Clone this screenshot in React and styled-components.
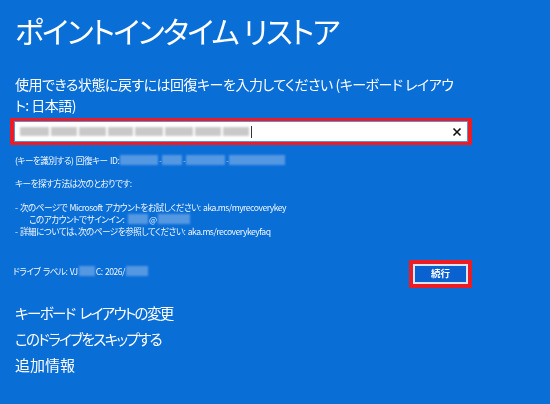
import styled, { createGlobalStyle } from "styled-components";

const GlobalStyle = createGlobalStyle`
  html, body {
    margin: 0;
    padding: 0;
    background: #0a6ed7;
  }
`;

const FONT = `"Noto Sans CJK JP", "Noto Sans", sans-serif`;

const Screen = styled.div`
  width: 550px;
  height: 404px;
  box-sizing: border-box;
  padding: 12px 0 0 15px;
  background: #0a6ed7;
  color: #fff;
  font-family: ${FONT};
  font-feature-settings: "palt";
  overflow: hidden;
  display: flex;
  flex-direction: column;
  filter: blur(0.3px);
`;

const Title = styled.h1`
  margin: 0;
  font-size: 30px;
  line-height: 36px;
  font-weight: 400;
  letter-spacing: -1.7px;
  white-space: nowrap;
`;

const Prompt = styled.p`
  margin: 26px 0 0;
  width: 443px;
  font-size: 14px;
  line-height: 21px;
  font-weight: 400;
  letter-spacing: -0.5px;
`;

const KeyBox = styled.div`
  margin: 2px 0 0 -5px;
  width: 462px;
  height: 27px;
  box-sizing: border-box;
  border-style: solid;
  border-color: #ec1c24;
  border-width: 3px 4px;
`;

const KeyField = styled.div`
  height: 100%;
  box-sizing: border-box;
  border: 1px solid #5b8fd8;
  background: #fff;
  display: flex;
  align-items: center;
  padding: 0 5px;
  color: #111;
`;

const KeyGroup = styled.span`
  display: inline-block;
  width: ${(p) => p.$w}px;
  height: 9px;
  margin-right: 2px;
  background: #c9c9c9;
  filter: blur(1px);
`;

const Caret = styled.span`
  width: 1px;
  height: 12px;
  background: #333;
`;

const ClearIcon = styled.svg`
  margin-left: auto;
  width: 10px;
  height: 10px;
`;

const Small = styled.div`
  font-size: 8.6px;
  line-height: 12px;
  letter-spacing: -0.5px;
  word-spacing: 1px;
  white-space: pre;
  font-weight: 400;
  margin-top: ${(p) => p.$top || 0}px;
  padding-left: ${(p) => p.$indent || 0}px;
  margin-left: ${(p) => p.$shift || 0}px;
  display: flex;
  align-items: center;
  opacity: 0.95;
`;

const Smudge = styled.span`
  display: inline-block;
  width: ${(p) => p.$w}px;
  height: 10px;
  margin: 0 1px;
  background: #5a9be3;
  filter: blur(0.8px);
`;

const Dash = styled.span`
  font-size: 7px;
  color: #cfe3fa;
`;

const ActionRow = styled.div`
  display: flex;
  justify-content: flex-end;
  width: 457px;
  margin-top: -17px;
`;

const ContinueFrame = styled.div`
  border: 4px solid #ec1c24;
  width: 63px;
  height: 28px;
  box-sizing: border-box;
  margin-left: auto;
`;

const ContinueButton = styled.button`
  display: block;
  width: 100%;
  height: 100%;
  box-sizing: border-box;
  padding: 0;
  border: 2px solid #d4e6f8;
  background: #0a62d0;
  color: #fff;
  font-family: ${FONT};
  font-size: 9.5px;
  font-weight: 700;
  line-height: 1;
`;

const Links = styled.nav`
  margin-top: 12px;
  display: flex;
  flex-direction: column;
`;

const LinkItem = styled.a`
  font-size: ${(p) => (p.$kana ? "14.5px" : "15px")};
  line-height: 26px;
  font-weight: 400;
  letter-spacing: ${(p) => (p.$kana ? "-1.6px" : "0")};
  word-spacing: 3px;
  white-space: nowrap;
`;

const keyWidths = [29, 26, 27, 25, 28, 28, 26, 26];

export default function App() {
  return (
    <>
      <GlobalStyle />
      <Screen>
        <Title>ポイントインタイム リストア</Title>
        <Prompt>使用できる状態に戻すには回復キーを入力してください (キーボード レイアウト: 日本語)</Prompt>
        <KeyBox>
          <KeyField>
            {keyWidths.map((w, i) => (
              <KeyGroup key={i} $w={w} />
            ))}
            <Caret />
            <ClearIcon viewBox="0 0 10 10">
              <path d="M1.5 1.5L8.5 8.5M8.5 1.5L1.5 8.5" stroke="#111" strokeWidth="1.6" fill="none" />
            </ClearIcon>
          </KeyField>
        </KeyBox>
        <Small $top={9}>
          (キーを識別する) 回復キー ID: 
          <Smudge $w={38} /><Dash>-</Dash><Smudge $w={20} /><Dash>-</Dash><Smudge $w={39} /><Dash>-</Dash><Smudge $w={56} />
        </Small>
        <Small $top={11}>キーを探す方法は次のとおりです:</Small>
        <Small $top={12}>- 次のページで Microsoft アカウントをお試しください: aka.ms/myrecoverykey</Small>
        <Small $indent={14}>
          このアカウントでサインイン: <Smudge $w={20} />@<Smudge $w={32} />
        </Small>
        <Small>- 詳細については、次のページを参照してください: aka.ms/recoverykeyfaq</Small>
        <Small $top={28} $shift={-2}>
          ドライブ ラベル: VJ<Smudge $w={16} />C: 2026/<Smudge $w={22} />
        </Small>
        <ActionRow>
          <ContinueFrame>
            <ContinueButton>続行</ContinueButton>
          </ContinueFrame>
        </ActionRow>
        <Links>
          <LinkItem $kana>キーボード レイアウトの変更</LinkItem>
          <LinkItem $kana>このドライブをスキップする</LinkItem>
          <LinkItem>追加情報</LinkItem>
        </Links>
      </Screen>
    </>
  );
}
